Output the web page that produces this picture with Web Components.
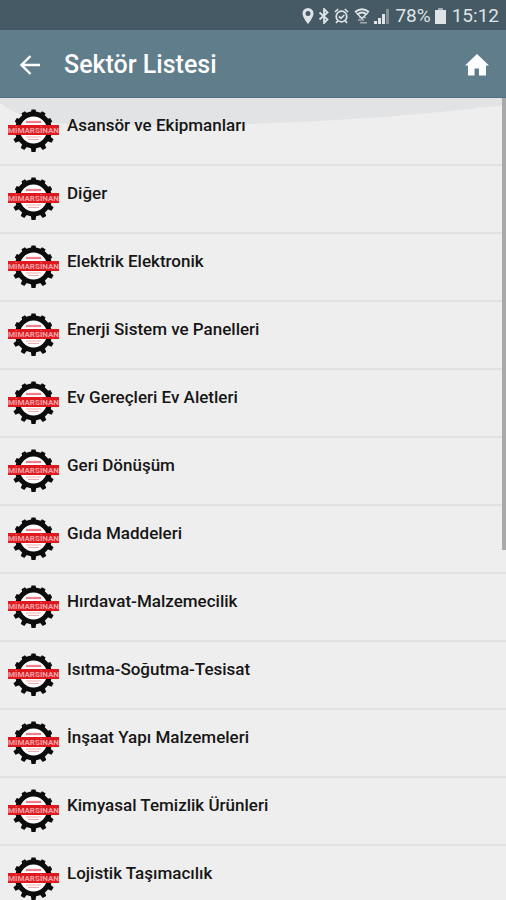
<!DOCTYPE html>
<html lang="tr">
<head>
<meta charset="utf-8">
<meta name="viewport" content="width=device-width, initial-scale=1">
<title>Sektör Listesi</title>
<style>
  html, body { height: 100%; margin: 0; }
  body { font-family: Roboto, "Liberation Sans", sans-serif; background: #eeeeee; overflow: hidden; }
</style>
</head>
<body>
<sector-app></sector-app>

<script>
(function () {
  // Small helper: every element gets an open shadow root from a template
  function stamp(host, html) {
    const template = document.createElement("template");
    template.innerHTML = html;
    const root = host.attachShadow({ mode: "open" });
    root.appendChild(template.content.cloneNode(true));
    return root;
  }

  class StatusBar extends HTMLElement {
    constructor() {
      super();
      stamp(this, `
        <style>
          :host { display: flex; align-items: center; justify-content: flex-end; height: 30px; padding: 2px 7px 0 0;
            box-sizing: border-box; background: #455a64; color: #dfe4e7; font-size: 19px; line-height: 24px; }
          svg { display: block; fill: currentColor; }
          .icons { display: flex; align-items: center; gap: 4px; margin-right: 5px; }
          .battery { margin: 0 6px 0 4px; }
        </style>
        <div class="icons">
          <svg width="12" height="16" viewBox="0 0 12 16"><path fill-rule="evenodd" d="M6 0a5.500 5.500 0 0 0-5.500 5.500C.5 9.500 6 16 6 16s5.500-6.500 5.500-10.500A5.500 5.500 0 0 0 6 0zm0 3a2.500 2.500 0 1 1 0 5 2.500 2.500 0 0 1 0-5z"/></svg>
          <svg width="12" height="16" viewBox="0 0 12 16"><path d="M1.500 4.500l8 7L6 15V1l3.500 3.500-8 7" fill="none" stroke="currentColor" stroke-width="1.800"/></svg>
          <svg width="15" height="16" viewBox="0 0 15 16"><g fill="none" stroke="currentColor" stroke-width="1.700"><circle cx="7.500" cy="8.500" r="5.300"/><path d="M1 4l3.200-3M14 4l-3.200-3M4 12.500L2 15M11 12.500l2 2.500M5 8.300l2 2 3.300-3.300"/></g></svg>
        </div>
        <div class="icons">
          <svg width="16" height="16" viewBox="0 0 16 16"><g fill="none" stroke="currentColor"><path stroke-width="1.800" d="M1 4Q8-1.500 15 4M3.500 6.500q4.500-4 9 0"/><path d="M2 4.500l6 6 6-6" stroke-width="1.300"/><path opacity=".6" stroke-width="1.600" d="M5 9.500h7M4 12h6M6 14.800h7"/></g></svg>
          <svg width="16" height="16" viewBox="0 0 16 16"><path d="M0 13h3v3H0zM4 10h3v6H4zM8 6h3v10H8z"/><path opacity=".4" d="M12 1h3v15h-3z"/></svg>
        </div>
        <span>78%</span>
        <svg class="battery" width="11" height="16" viewBox="0 0 11 16"><path d="M0 2h11v14H0z"/><path opacity=".6" d="M3 0h5v2H3z"/></svg>
        <time>15:12</time>
      `);
    }
  }

  class AppBar extends HTMLElement {
    constructor() {
      super();
      stamp(this, `
        <style>
          :host { display: flex; align-items: center; height: 68px; padding: 2px 16px 0 18px; box-sizing: border-box;
            background: #607d8b; border-bottom: 1px solid #527080; color: #fff; }
          button { display: block; padding: 0; border: 0; background: none; color: inherit; cursor: pointer; }
          svg { display: block; }
          h1 { flex: 1; margin: 0 0 0 22px; font-size: 25px; line-height: 32px; font-weight: 500; }
        </style>
        <button type="button" aria-label="Geri">
          <svg width="24" height="24" viewBox="0 0 24 24"><path d="M22 12H4M12.500 3L3.500 12l9 9" fill="none" stroke="currentColor" stroke-width="2.400"/></svg>
        </button>
        <h1><slot></slot></h1>
        <button type="button" aria-label="Ana sayfa">
          <svg width="26" height="24" viewBox="0 0 26 24"><path fill="currentColor" d="M13 1L1 12.500h3V22.500h6.500v-7h4.500v7H22V12.500h3z"/></svg>
        </button>
      `);
    }
  }

  class GearBadge extends HTMLElement {
    constructor() {
      super();
      let teeth = "";
      for (let angle = 0; angle < 360; angle += 30) {
        // the teeth are longer on the lower half
        const top = angle > 80 && angle < 280 ? 0 : 1.5;
        teeth += `<path d="M22.500 6L23.500 ${top}h4l1 ${6 - top}z" transform="rotate(${angle} 25.500 22)"/>`;
      }
      stamp(this, `
        <style>
          :host { display: block; }
          svg { display: block; }
        </style>
        <svg width="51" height="44" viewBox="0 0 51 44" aria-hidden="true">
          <g fill="#0c0c0c">${teeth}</g>
          <circle cx="25.500" cy="22" r="16" fill="#fff" stroke="#0c0c0c" stroke-width="5"/>
          <g stroke="#e8555c" fill="none">
            <path d="M18 14h15" stroke-width="2.200" opacity=".75"/>
            <path d="M18 29h15M20 31.500h11" stroke-width="1.200" opacity=".5"/>
          </g>
          <path d="M0 17h51v10H0z" fill="#df1920"/>
          <text x="25.500" y="25" text-anchor="middle" font-size="8" font-weight="700" fill="#f3a3a5">MİMARSİNAN</text>
        </svg>
      `);
    }
  }

  class SectorItem extends HTMLElement {
    constructor() {
      super();
      stamp(this, `
        <style>
          :host { display: flex; align-items: flex-start; gap: 8px; height: 68px; padding: 10px 8px 0;
            box-sizing: border-box; border-bottom: 2px solid #e1e1e1; color: #161616; }
          .name { margin-top: 5px; font-size: 17px; line-height: 24px; font-weight: 500; }
        </style>
        <gear-badge></gear-badge>
        <span class="name"><slot></slot></span>
      `);
    }
  }

  class SectorList extends HTMLElement {
    constructor() {
      super();
      stamp(this, `
        <style>
          :host { display: block; position: relative; flex: 1; min-height: 0; overflow: hidden; background: #eeeeee; }
          .backdrop { position: absolute; top: 0; left: 0; width: 100%; height: 28px; }
          .items { position: relative; height: 100%; overflow-y: auto; scrollbar-width: none; }
          .thumb { position: absolute; top: 0; right: 0; width: 4px; height: 56.4%; background: #a9a9a9; }
        </style>
        <svg class="backdrop" viewBox="0 0 506 28" preserveAspectRatio="none" aria-hidden="true">
          <path fill="#e1e3e4" d="M0 0h506v7Q380 22 250 26Q120 29 50 25Q20 20 0 5z"/>
        </svg>
        <div class="items" role="list"><slot></slot></div>
        <div class="thumb"></div>
      `);
    }
  }

  const sectors = [
    "Asansör ve Ekipmanları",
    "Diğer",
    "Elektrik Elektronik",
    "Enerji Sistem ve Panelleri",
    "Ev Gereçleri Ev Aletleri",
    "Geri Dönüşüm",
    "Gıda Maddeleri",
    "Hırdavat-Malzemecilik",
    "Isıtma-Soğutma-Tesisat",
    "İnşaat Yapı Malzemeleri",
    "Kimyasal Temizlik Ürünleri",
    "Lojistik Taşımacılık"
  ];

  class SectorApp extends HTMLElement {
    constructor() {
      super();
      stamp(this, `
        <style>
          :host { display: flex; flex-direction: column; height: 100vh; }
        </style>
        <status-bar></status-bar>
        <app-bar>Sektör Listesi</app-bar>
        <sector-list>
          ${sectors.map((name) => `<sector-item role="listitem">${name}</sector-item>`).join("")}
        </sector-list>
      `);
    }
  }

  customElements.define("status-bar", StatusBar);
  customElements.define("app-bar", AppBar);
  customElements.define("gear-badge", GearBadge);
  customElements.define("sector-item", SectorItem);
  customElements.define("sector-list", SectorList);
  customElements.define("sector-app", SectorApp);
})();
</script>
</body>
</html>
